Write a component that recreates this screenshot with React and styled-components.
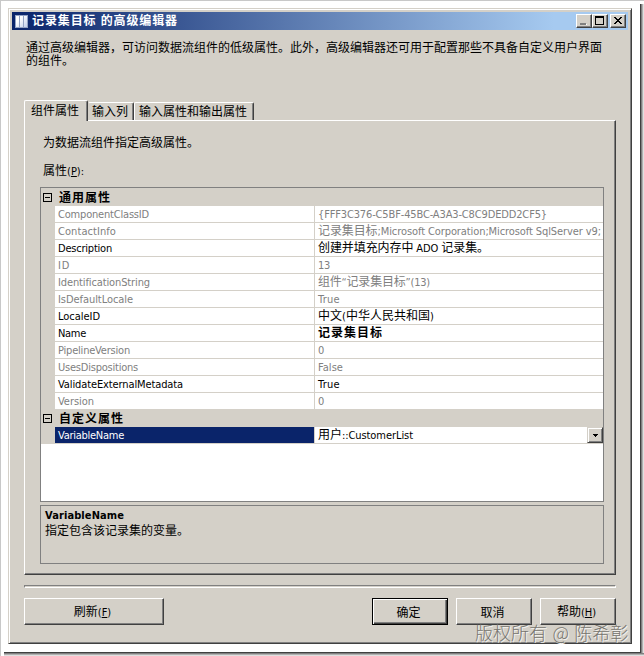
import React from 'react';
import styled, { createGlobalStyle, css } from 'styled-components';

const GENERAL = [
  { name: 'ComponentClassID', value: '{FFF3C376-C5BF-45BC-A3A3-C8C9DEDD2CF5}', nameWidth: 91, valueWidth: 229 },
  { name: 'ContactInfo', value: '记录集目标;Microsoft Corporation;Microsoft SqlServer v9;', nameWidth: 58, valueWidth: 283 },
  { name: 'Description', value: '创建并填充内存中 ADO 记录集。', nameWidth: 54, valueWidth: 171, editable: true },
  { name: 'ID', value: '13', nameWidth: 12, valueWidth: 12 },
  { name: 'IdentificationString', value: '组件“记录集目标”(13)', nameWidth: 92, valueWidth: 112 },
  { name: 'IsDefaultLocale', value: 'True', nameWidth: 75, valueWidth: 22 },
  { name: 'LocaleID', value: '中文(中华人民共和国)', nameWidth: 42, valueWidth: 116, editable: true },
  { name: 'Name', value: '记录集目标', nameWidth: 28, valueWidth: 65, editable: true, changed: true },
  { name: 'PipelineVersion', value: '0', nameWidth: 72, valueWidth: 6 },
  { name: 'UsesDispositions', value: 'False', nameWidth: 80, valueWidth: 25 },
  { name: 'ValidateExternalMetadata', value: 'True', nameWidth: 125, valueWidth: 22, editable: true },
  { name: 'Version', value: '0', nameWidth: 36, valueWidth: 6 },
];

// Latin runs use the narrow UI face, everything else keeps the CJK face.
function Label({ text, width, bold }) {
  const ref = React.useRef(null);
  React.useLayoutEffect(() => {
    const el = ref.current;
    if (!width || !el) return;
    el.style.letterSpacing = '0px';
    const diff = width - el.getBoundingClientRect().width;
    el.style.letterSpacing = `${diff / text.length}px`;
  }, [text, width]);
  return (
    <Run ref={ref} $bold={bold}>
      {text.split(/([\u3000-\u9fff\uff00-\uffef]+)/).map((part, i) =>
        i % 2 ? part : part && <Latin key={i}>{part}</Latin>
      )}
    </Run>
  );
}

function Row({ item }) {
  return (
    <PropertyRow>
      <NameCell $muted={!item.editable} $selected={item.selected}>
        <Label text={item.name} width={item.nameWidth} />
      </NameCell>
      <ValueCell $muted={!item.editable}>
        <Label text={item.value} width={item.valueWidth} bold={item.changed} />
      </ValueCell>
      {item.selected && (
        <DropButton type="button">
          <svg width="5" height="3" shapeRendering="crispEdges">
            <path d="M0 0h5v1h-1v1h-1v1h-1v-1h-1v-1h-1z" fill="#000" />
          </svg>
        </DropButton>
      )}
    </PropertyRow>
  );
}

function Category({ title, tall, width }) {
  return (
    <CategoryRow $tall={tall}>
      <svg width="9" height="9" shapeRendering="crispEdges">
        <rect x="0.5" y="0.5" width="8" height="8" fill="none" stroke="#000" />
        <path d="M2 4h5v1h-5z" fill="#000" />
      </svg>
      <Label text={title} width={width} bold />
    </CategoryRow>
  );
}

export default function App() {
  return (
    <>
      <GlobalStyle />
      <Page>
        <Window>
          <TitleBar>
            <AppIcon width="13" height="13" shapeRendering="crispEdges">
              <defs>
                <linearGradient id="column" x2="1" y2="1">
                  <stop offset="0.3" stopColor="#fff" />
                  <stop offset="1" stopColor="#c3d0ec" />
                </linearGradient>
              </defs>
              <rect width="13" height="13" fill="#94a3c4" />
              <path d="M1 1h3v11h-3zM5 1h3v11h-3zM9 1h3v11h-3z" fill="url(#column)" />
            </AppIcon>
            <Title>
              <Label text="记录集目标 的高级编辑器" width={146} bold />
            </Title>
            <CaptionButton type="button">
              <svg width="12" height="10" shapeRendering="crispEdges">
                <path d="M3 8h6v1h-6z" fill="#fff" />
                <path d="M2 7h6v2h-6z" fill="#808080" />
              </svg>
            </CaptionButton>
            <CaptionButton type="button">
              <svg width="12" height="10" shapeRendering="crispEdges">
                <path d="M1 0h9v9h-9zM2 2v6h7v-6z" fill="#000" fillRule="evenodd" />
              </svg>
            </CaptionButton>
            <CaptionButton type="button" $apart>
              <svg width="12" height="10" shapeRendering="crispEdges">
                <path
                  d="M2 1h2v1h1v1h2v-1h1v-1h2v1h-1v1h-1v1h-1v1h1v1h1v1h1v1h-2v-1h-1v-1h-2v1h-1v1h-2v-1h1v-1h1v-1h1v-1h-1v-1h-1v-1h-1z"
                  fill="#000"
                />
              </svg>
            </CaptionButton>
          </TitleBar>

          <Intro>
            通过高级编辑器，可访问数据流组件的低级属性。此外，高级编辑器还可用于配置那些不具备自定义用户界面的组件。
          </Intro>

          <Tabs>
            <Tab $active $width={64}>组件属性</Tab>
            <Tab $width={46}>输入列</Tab>
            <Tab $width={120}>输入属性和输出属性</Tab>
          </Tabs>

          <TabPage>
            <Hint>为数据流组件指定高级属性。</Hint>
            <Caption>
              属性<Latin>(<u>P</u>):</Latin>
            </Caption>
            <Grid>
              <Category title="通用属性" tall width={52} />
              {GENERAL.map((item) => (
                <Row key={item.name} item={item} />
              ))}
              <Category title="自定义属性" width={65} />
              <Row
                item={{
                  name: 'VariableName',
                  value: '用户::CustomerList',
                  nameWidth: 66,
                  valueWidth: 95,
                  editable: true,
                  selected: true,
                }}
              />
            </Grid>
            <HelpPane>
              <Label text="VariableName" width={79} bold />
              <HelpText>指定包含该记录集的变量。</HelpText>
            </HelpPane>
          </TabPage>

          <Divider />
          <Footer>
            <Button type="button" $width={140}>
              刷新<Latin>(<u>F</u>)</Latin>
            </Button>
            <Spacer />
            <Button type="button" $width={76} $primary>确定</Button>
            <Button type="button" $width={76}>取消</Button>
            <Button type="button" $width={76}>
              帮助<Latin>(<u>H</u>)</Latin>
            </Button>
          </Footer>
        </Window>
        <Watermark>版权所有 @ 陈希彰</Watermark>
      </Page>
    </>
  );
}

const GlobalStyle = createGlobalStyle`
  * {
    box-sizing: border-box;
  }
  body {
    margin: 0;
    background: #fff;
    overflow: hidden;
  }
`;

const raised = css`
  border: 1px solid;
  border-color: #fff #404040 #404040 #fff;
  box-shadow: inset -1px -1px 0 #808080;
`;

const Page = styled.div`
  position: relative;
  width: 644px;
  height: 656px;
  padding: 7px 0 0 7px;
  border: 1px solid #c8c8c8;
  border-right: 0;
  border-bottom: 0;
  background:
    linear-gradient(to right, #404040 0 1px, #808080 1px 2px, #b0b0b0 2px 3px, #e0e0e0 3px) 639px 3px / 4px 649px no-repeat,
    linear-gradient(to bottom, #404040 0 1px, #808080 1px 2px, #b0b0b0 2px 3px, #e0e0e0 3px) 3px 651px / 640px 4px no-repeat,
    #fff;
  font: 12px/13px 'Noto Sans CJK SC', sans-serif;
  color: #000;
`;

const Window = styled.div`
  display: flex;
  flex-direction: column;
  width: 624px;
  height: 636px;
  padding: 3px;
  border: 1px solid;
  border-color: #d4d0c8 #404040 #404040 #d4d0c8;
  box-shadow: inset 1px 1px 0 #fff, inset -1px -1px 0 #808080;
  background: #d4d0c8;
`;

const Run = styled.span`
  display: inline-block;
  white-space: pre;
  font-weight: ${(p) => (p.$bold ? 700 : 400)};
`;

const Latin = styled.span`
  font-family: 'DejaVu Sans Condensed', 'DejaVu Sans', sans-serif;
  font-stretch: condensed;
  font-size: 11px;

  u {
    text-underline-offset: 1px;
  }
`;

const TitleBar = styled.div`
  display: flex;
  align-items: center;
  flex: none;
  height: 18px;
  padding: 0 2px 0 3px;
  background: linear-gradient(to right, #0a246a, #a6caf0 88%);
  color: #fff;
`;

const AppIcon = styled.svg`
  flex: none;
`;

const Title = styled.div`
  flex: 1;
  padding: 0 0 2px 4px;
`;

const CaptionButton = styled.button`
  ${raised}
  display: block;
  flex: none;
  width: 16px;
  height: 14px;
  margin: 0 0 0 ${(p) => (p.$apart ? 2 : 0)}px;
  padding: 1px;
  background: #d4d0c8;

  svg {
    display: block;
  }
`;

const Intro = styled.p`
  flex: none;
  width: 580px;
  height: 70px;
  margin: 0 0 0 14px;
  padding-top: 10px;
`;

const Tabs = styled.div`
  position: relative;
  z-index: 1;
  display: flex;
  flex: none;
  align-items: flex-end;
  height: 20px;
  margin-left: 12px;
`;

const Tab = styled.div`
  width: ${(p) => p.$width}px;
  height: ${(p) => (p.$active ? 21 : 18)}px;
  margin-bottom: ${(p) => (p.$active ? -1 : 0)}px;
  padding: ${(p) => (p.$active ? '2px 0 0 6px' : '1px 0 0 3px')};
  border: 1px solid;
  border-color: #fff #404040 transparent ${(p) => (p.$active ? '#fff' : '#d4d0c8')};
  border-bottom: 0;
  border-radius: 2px 2px 0 0;
  box-shadow: inset -1px 0 0 #808080;
  background: #d4d0c8;
  white-space: nowrap;

  &:last-child {
    border-left-color: #fff;
    padding-left: 4px;
  }
`;

const TabPage = styled.div`
  ${raised}
  flex: none;
  width: 592px;
  height: 455px;
  margin-left: 12px;
  padding: 14px 11px 0 15px;
`;

const Hint = styled.div`
  height: 28px;
  padding-left: 3px;
`;

const Caption = styled.div`
  height: 24px;
  padding-left: 3px;
`;

const Grid = styled.div`
  width: 564px;
  height: 315px;
  border: 1px solid #808080;
  background: #fff;
`;

const CategoryRow = styled.div`
  display: flex;
  align-items: center;
  gap: 7px;
  height: ${(p) => (p.$tall ? 18 : 17)}px;
  padding-left: 2px;
  background: #d4d0c8;

  ${Run} {
    padding-bottom: 2px;
  }
`;

const PropertyRow = styled.div`
  display: flex;
  height: 17px;
  padding-left: 14px;
  border-bottom: 1px solid #d4d0c8;
  background: linear-gradient(#d4d0c8, #d4d0c8) 0 0 / 14px 100% no-repeat;
`;

const cell = css`
  padding-left: 3px;
  line-height: 14px;
  white-space: nowrap;
  color: ${(p) => (p.$muted ? '#808080' : '#000')};
`;

const NameCell = styled.div`
  ${cell}
  flex: none;
  width: 260px;
  border-right: 1px solid #d4d0c8;
  ${(p) => p.$selected && 'background: #0a246a; color: #fff;'}
`;

const ValueCell = styled.div`
  ${cell}
  flex: 1;
  min-width: 0;
`;

const DropButton = styled.button`
  display: flex;
  align-items: center;
  justify-content: center;
  width: 16px;
  height: 16px;
  padding: 0;
  border: 1px solid;
  border-color: #d4d0c8 #404040 #404040 #d4d0c8;
  box-shadow: inset 1px 1px 0 #fff, inset -1px -1px 0 #808080;
  background: #d4d0c8;
`;

const HelpPane = styled.div`
  width: 564px;
  height: 59px;
  margin-top: 3px;
  padding: 0 4px;
  border: 1px solid #808080;
  line-height: 15px;
`;

const HelpText = styled.div`
  line-height: 14px;
`;

const Divider = styled.div`
  flex: none;
  width: 592px;
  height: 3px;
  margin: 10px 0 10px 12px;
  border: 1px solid;
  border-color: #808080 #fff #fff #808080;
`;

const Footer = styled.div`
  display: flex;
  gap: 8px;
  width: 592px;
  margin-left: 12px;
`;

const Spacer = styled.div`
  flex: 1;
`;

const Button = styled.button`
  ${raised}
  width: ${(p) => p.$width}px;
  height: 27px;
  padding: 0 3px 0 0;
  background: #d4d0c8;
  color: #000;
  font: inherit;
  ${(p) =>
    p.$primary &&
    css`
      border-color: #000;
      box-shadow: inset 1px 1px 0 #fff, inset -1px -1px 0 #404040, inset -2px -2px 0 #808080;
    `}
`;

const Watermark = styled.div`
  position: absolute;
  left: 474px;
  top: 619px;
  font-size: 18px;
  line-height: 24px;
  font-weight: 300;
  word-spacing: 1.5px;
  white-space: pre;
  color: #77756f;
  text-shadow: 1px 1px 0 #f4f3f0;
`;
